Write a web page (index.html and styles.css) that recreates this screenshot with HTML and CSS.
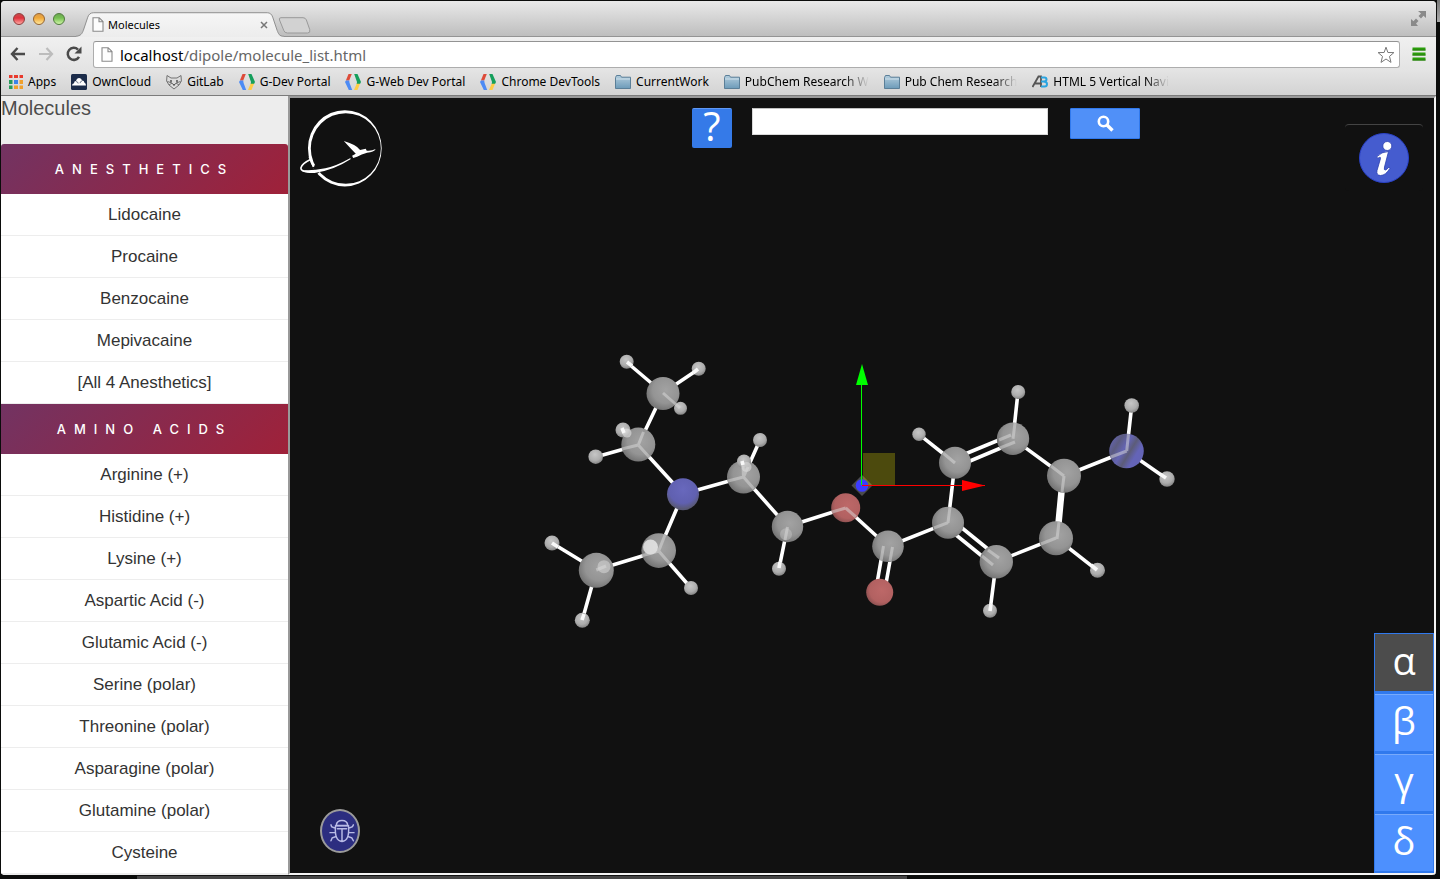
FILE: index.html
```html
<!DOCTYPE html>
<html lang="en">
<head>
<meta charset="utf-8">
<title>Molecules</title>
<link rel="stylesheet" href="styles.css">
</head>
<body>
<svg class="defs" aria-hidden="true">
  <defs>
    <linearGradient id="tabfill" x1="0" y1="0" x2="0" y2="1"><stop offset="0" stop-color="#f6f6f6"/><stop offset="1" stop-color="#ececec"/></linearGradient>
    <linearGradient id="folderfill" x1="0" y1="0" x2="0" y2="1"><stop offset="0" stop-color="#b3cddd"/><stop offset="1" stop-color="#6d9bb9"/></linearGradient>
    <radialGradient id="gc" cx=".58" cy=".4" r=".66"><stop offset="0" stop-color="#a2a2a2"/><stop offset=".6" stop-color="#949494"/><stop offset="1" stop-color="#6e6e6e"/></radialGradient>
    <radialGradient id="gh" cx=".45" cy=".35" r=".7"><stop offset="0" stop-color="#c6c6c6"/><stop offset=".6" stop-color="#adadad"/><stop offset="1" stop-color="#7c7c7c"/></radialGradient>
    <radialGradient id="gn" cx=".5" cy=".35" r=".72"><stop offset="0" stop-color="#6868bd"/><stop offset=".6" stop-color="#6060b0"/><stop offset=".85" stop-color="#595973"/><stop offset="1" stop-color="#55558f"/></radialGradient>
    <linearGradient id="gm" x1="0" y1=".2" x2="1" y2=".8"><stop offset="0" stop-color="#6464b4"/><stop offset=".22" stop-color="#5c5c80"/><stop offset=".42" stop-color="#6464b4"/><stop offset=".58" stop-color="#5c5c78"/><stop offset=".75" stop-color="#6464b8"/><stop offset="1" stop-color="#6464b4"/></linearGradient>
    <radialGradient id="go" cx=".58" cy=".42" r=".64"><stop offset="0" stop-color="#bd6868"/><stop offset=".7" stop-color="#b26161"/><stop offset="1" stop-color="#864e4e"/></radialGradient>
    <symbol id="page" viewBox="0 0 12 15"><path d="M1 .7h6.2L11 4.5v9.8H1zM7 .7v4h4" fill="#fdfdfd" stroke="#8a8a8a" stroke-width="1.1"/></symbol>
    <symbol id="folder" viewBox="0 0 16 14"><path d="M.5 2.500 1.500.5h4l1 1.700h9v11.300H.5z" fill="url(#folderfill)" stroke="#5b7f98"/><path d="M1 4h14" stroke="#cfe0ea"/></symbol>
    <symbol id="devs" viewBox="0 0 16 16"><path d="M3.500 0h3.300L4.200 6.500H.9z" fill="#dd4b39"/><path d="M.9 6.500h3.300l.4 2.500 2.600 7H3.800L0 8z" fill="#4c8bf5"/><path d="M9.200 0h3.300L16 8l-1 2h-3.300l.3-2z" fill="#159f5c"/><path d="M11.600 9.700H15L12.500 16H9z" fill="#ffcd46"/></symbol>
  </defs>
</svg>
<div class="window">
  <header class="titlebar">
    <div class="lights">
      <button class="light light-red" aria-label="Close window"></button>
      <button class="light light-amber" aria-label="Minimize window"></button>
      <button class="light light-green" aria-label="Zoom window"></button>
    </div>
    <div class="tab">
      <svg class="tab-shape" viewBox="0 0 212 25" aria-hidden="true"><path d="M0 24.500C5 24 6 22 7.500 18.500L12 5Q13.500.5 18 .5H195Q199 .5 200.500 5L205 18.500C206.500 22 207 24.500 212 24.500V26H0z" fill="url(#tabfill)"/><path d="M0 24.500C5 24 6 22 7.500 18.500L12 5Q13.500.5 18 .5H195Q199 .5 200.500 5L205 18.500C206.500 22 207 24.500 212 24.500" fill="none" stroke="#8e8e8e"/></svg>
      <svg class="tab-icon" aria-hidden="true"><use href="#page"/></svg>
      <span class="tab-title">Molecules</span>
      <button class="tab-close" aria-label="Close tab"><svg viewBox="0 0 8 8"><path d="M1 1l6 6M7 1 1 7" stroke="#777" stroke-width="1.500"/></svg></button>
    </div>
    <button class="new-tab" aria-label="New tab"><svg viewBox="0 0 33 17"><path d="M3 .7h22q2.500 0 3.400 2.300l3.300 9.500q1 3.500-2 3.500H9.500q-2.800 0-3.700-2.500L1.500 3Q.7.7 3 .7z" fill="#d2d2d2" stroke="#999"/></svg></button>
    <button class="fullscreen" aria-label="Full screen"><svg viewBox="0 0 15 15"><path d="M7 0h8v7l-2.500-2.300L10 7.500 7.500 5 10 2.500zM0 8l2.500 2.300L5 7.500 7.500 10 5 12.500 7 15H0z" fill="#8a8a8a"/></svg></button>
  </header>
  <nav class="toolbar" aria-label="Navigation">
    <button class="nav-button" aria-label="Back"><svg viewBox="0 0 16 14"><path d="M7.500 1 2 7l5.500 6M2.500 7H15" fill="none" stroke="#4a4a4a" stroke-width="2.400"/></svg></button>
    <button class="nav-button" aria-label="Forward"><svg viewBox="0 0 16 14"><path d="M8.500 1 14 7l-5.500 6M13.500 7H1" fill="none" stroke="#bcbcbc" stroke-width="2.200"/></svg></button>
    <button class="nav-button" aria-label="Reload"><svg viewBox="0 0 16 16"><path d="M13 10.800A6 6 0 1 1 12 3.600" fill="none" stroke="#4a4a4a" stroke-width="2.500"/><path d="M15.500.5v7h-7z" fill="#4a4a4a"/></svg></button>
    <div class="address">
      <svg class="address-icon" aria-hidden="true"><use href="#page"/></svg>
      <a class="url" href="#"><span class="host">localhost</span>/dipole/molecule_list.html</a>
      <button class="star" aria-label="Bookmark this page"><svg viewBox="0 0 18 18"><path d="M9 1.200l1.900 5.300 6 .1-4.400 3.800 1.500 6L9 13l-5 3.400 1.500-6L1.100 6.600l6-.1z" fill="#fff" stroke="#777" stroke-linejoin="round"/></svg></button>
    </div>
    <button class="menu" aria-label="Menu"><svg viewBox="0 0 14 14"><path d="M.5 2h13M.5 7h13M.5 12h13" stroke="#2a9e0a" stroke-width="2.800"/><path d="M.5 3h13M.5 8h13M.5 13h13" stroke="#2b7a12"/></svg></button>
  </nav>
  <nav class="bookmarks" aria-label="Bookmarks">
    <a class="bookmark" href="#"><svg class="apps-icon" viewBox="0 0 14 14"><path d="M0 0h3.500v3H0zM5 0h4v3H5zM10.500 0H14v3h-3.500z" fill="#e8392c"/><path d="M0 5h3.500v4H0zM0 10.500h3.500V14H0z" fill="#279b5a"/><path d="M5 5h4v4H5z" fill="#3b84e8"/><path d="M10.500 5H14v4h-3.500zM10.500 10.500H14V14h-3.500zM5 10.500h4V14H5z" fill="#f0a02c"/></svg><span>Apps</span></a>
    <a class="bookmark" href="#"><svg class="mark" viewBox="0 0 16 16"><rect width="16" height="16" rx="1.500" fill="#1c2c4a"/><path d="M1 11.500q0-2 2-2.200Q3 7 5 7q.8-3 3.200-3T11 6.500q2.300 0 2.500 2.300Q15 9.500 15 11.500z" fill="#fff"/><path d="M5 7.500q2 0 2.200 2M11 7q-1.800.3-2 2.200" fill="none" stroke="#1c2c4a" stroke-width=".6"/></svg><span>OwnCloud</span></a>
    <a class="bookmark" href="#"><svg class="mark" viewBox="0 0 16 16"><path d="M1 1.500 5 4h6l4-2.500.4 5.500L13 11l-5 4-5-4L.6 7zM1.500 7.500 6 9l2 2.500L10 9l4.500-1.500M3 11l3-2M13 11l-3-2" fill="#ddd" stroke="#666" stroke-width=".9"/><circle cx="5" cy="7" r=".9" fill="#444"/><circle cx="11" cy="7" r=".9" fill="#444"/><path d="M7 10h2l-1 2z" fill="#444"/></svg><span>GitLab</span></a>
    <a class="bookmark" href="#"><svg class="mark"><use href="#devs"/></svg><span>G-Dev Portal</span></a>
    <a class="bookmark" href="#"><svg class="mark"><use href="#devs"/></svg><span>G-Web Dev Portal</span></a>
    <a class="bookmark" href="#"><svg class="mark"><use href="#devs"/></svg><span>Chrome DevTools</span></a>
    <a class="bookmark" href="#"><svg class="folder-icon"><use href="#folder"/></svg><span>CurrentWork</span></a>
    <a class="bookmark" href="#"><svg class="folder-icon"><use href="#folder"/></svg><span class="faded">PubChem Research W</span></a>
    <a class="bookmark" href="#"><svg class="folder-icon"><use href="#folder"/></svg><span class="faded">Pub Chem Research</span></a>
    <a class="bookmark" href="#"><svg class="mark" viewBox="0 0 16 16"><path d="M.5 13 6.500 2.500H9V13M3 9.500h6" fill="none" stroke="#555" stroke-width="1.800"/><path d="M9 3.500h3.500q2 0 2 2t-3 2q3.500 0 3.500 2.500T12.500 12.500H9M9 7.500h4" fill="none" stroke="#2aa4e0" stroke-width="2"/></svg><span class="faded">HTML 5 Vertical Navi</span></a>
  </nav>
  <div class="content">
    <aside class="sidebar">
      <h1 class="page-title">Molecules</h1>
      <h2 class="group group-first">ANESTHETICS</h2>
      <ul class="list">
        <li><a href="#">Lidocaine</a></li>
        <li><a href="#">Procaine</a></li>
        <li><a href="#">Benzocaine</a></li>
        <li><a href="#">Mepivacaine</a></li>
        <li><a href="#">[All 4 Anesthetics]</a></li>
      </ul>
      <h2 class="group">AMINO ACIDS</h2>
      <ul class="list">
        <li><a href="#">Arginine (+)</a></li>
        <li><a href="#">Histidine (+)</a></li>
        <li><a href="#">Lysine (+)</a></li>
        <li><a href="#">Aspartic Acid (-)</a></li>
        <li><a href="#">Glutamic Acid (-)</a></li>
        <li><a href="#">Serine (polar)</a></li>
        <li><a href="#">Threonine (polar)</a></li>
        <li><a href="#">Asparagine (polar)</a></li>
        <li><a href="#">Glutamine (polar)</a></li>
        <li><a href="#">Cysteine</a></li>
      </ul>
    </aside>
    <main class="viewer">
      <svg class="molecule" viewBox="290 98 1144 775" role="img" aria-label="Procaine molecule">
        <g stroke="#fff" stroke-width="3.600">
          <path d="M663 393 626.500 362M663 393 698.700 369M663 393 638.300 445M638.300 445 595.700 457M638.300 445 683 494M683 494 743.500 477M743.500 477 760 440M743.500 477 744 461M743.500 477 787.500 526.500M787.500 527 779 568.700M787.500 526.500 845.700 508M683 494 658.700 551M658.700 551 691 588M658.700 551 596.300 570M596.300 570 552 543M596.300 570 582.300 620"/>
          <path d="M845.700 508 888 546.500M888 546.500 948 522.700M883.500 546 875.500 592M892.500 547 884.500 592M948 522.700 955 462.700M955 463 919 434.300M953 459 1011 435M957 466.500 1015 442M1013 438.700 1018 392M1013 438.700 1064 476M1064 476 1126.700 451M1126.700 451 1131.700 405.700M1126.700 451 1167 479M1056 538 1097.300 570.300M1056 538 996.300 561.700M996.300 561.700 990 610.700M945 526 993 565M951 519 999 558"/>
          <path d="M1063 476 1057 539" stroke-width="6.500"/>
        </g>
        <g fill="url(#gc)">
          <circle cx="663" cy="393.500" r="16.500"/><circle cx="638.300" cy="444.600" r="17"/><circle cx="743.500" cy="477" r="16.500"/><circle cx="787.500" cy="526.500" r="15.700"/><circle cx="658.700" cy="550.600" r="17.300"/><circle cx="596.300" cy="570.300" r="17.500"/>
          <circle cx="888" cy="546.300" r="15.800"/><circle cx="948" cy="522.700" r="16"/><circle cx="955" cy="462.700" r="16"/><circle cx="1013" cy="438.700" r="16.200"/><circle cx="1064" cy="475.700" r="17"/><circle cx="1056" cy="538.300" r="17"/><circle cx="996.300" cy="561.700" r="16.700"/>
        </g>
        <circle cx="683" cy="494.300" r="16" fill="url(#gn)"/><circle cx="1126.500" cy="451" r="17.300" fill="url(#gm)"/>
        <circle cx="845.700" cy="507.700" r="14.500" fill="url(#go)"/><circle cx="879.700" cy="592.300" r="13.500" fill="url(#go)"/>
        <g fill="url(#gh)">
          <circle cx="626.700" cy="361.700" r="7"/><circle cx="698.700" cy="368.700" r="7"/><circle cx="680.500" cy="408.300" r="6.500"/><circle cx="623" cy="430" r="7.500"/><circle cx="595.700" cy="456.700" r="7.300"/><circle cx="760" cy="440" r="7"/><circle cx="744" cy="461.500" r="7"/><circle cx="779" cy="568.700" r="7"/><circle cx="691" cy="588" r="7"/><circle cx="552" cy="543" r="7.500"/><circle cx="582.300" cy="620.300" r="7.500"/>
          <circle cx="919" cy="434.300" r="6.700"/><circle cx="1018.200" cy="392" r="7"/><circle cx="1131.700" cy="405.500" r="7.300"/><circle cx="1167" cy="479" r="7.700"/><circle cx="1097.500" cy="570.300" r="7.500"/><circle cx="990" cy="610.700" r="7"/>
        </g>
        <g fill="#d2d2d2" opacity=".75"><circle cx="786" cy="534.300" r="6" opacity=".5"/><circle cx="604" cy="566.700" r="6.500" opacity=".8"/><circle cx="650.500" cy="547" r="7.500" fill="#f2f2f2"/><circle cx="746.500" cy="467" r="5"/><circle cx="627" cy="433" r="4.500" fill="#eee" opacity=".7"/></g>
        <g stroke="#dcdcdc" stroke-width="3" opacity=".5">
          <path d="M663 393 680 408M638.300 445 643.500 432M638.300 445 622 449M638.300 445 650 458M743.500 477 728 481M743.500 477 743 466M743.500 477 748 467M743.500 477 754 489M787.500 527 785 540M658.700 551 665 535M658.700 551 641 556M658.700 551 670 564M596.300 570 606 566"/>
          <path d="M845.700 508 832 512M845.700 508 856 517M883.500 546 881 561M892.500 547 890 561M948 522.700 934 528M948 522.700 950 507M955 463 943 453M1013 438.700 1015 423M1011 435 999 440M1015 442 1000 448M1064 476 1051 466M1064 476 1062 492M1126.700 451 1111 457M1126.700 451 1128.500 434M1056 538 1041 544M1057 539 1059 522M993 565 982 556M999 558 988 550"/>
        </g>
        <g stroke="#f8f8f8" stroke-width="3.600"><path d="M627 362 632 366M698 369 693 373M552 543 558 547M582 620 584 614M779 568 780 562M990 611 991 604M1097 570 1091 565M1166 478 1160 474M622 428 624 433M742 461 743 465"/></g>
        <path d="M863 453h32v32.500h-32z" fill="#4c4a0d"/>
        <path d="M862 475 872.500 485.500 862 496 851.500 485.500z" fill="#4a4a4c"/><path d="M863 476v9h9z" fill="#76752f"/>
        <circle cx="862" cy="485.500" r="6.300" fill="#3c3cff"/>
        <path d="M861.500 385V485" stroke="#00ff00"/><path d="M862 364 868 385H856z" fill="#00ff00"/>
        <path d="M862 485.500H985" stroke="#ff0000"/><path d="M962 480 985 485.500 962 491z" fill="#ff0000"/>
      </svg>
      <div class="top-controls">
        <svg class="logo" viewBox="30 40 250 240" role="img" aria-label="Logo">
          <path fill-rule="evenodd" d="M165 46a111 115 0 1 0 0 230a111 115 0 1 0 0-230zM168 55a105.500 106.500 0 1 1 0 213a105.500 106.500 0 1 1 0-213z" fill="#fff"/>
          <path d="M72 214 86 235" stroke="#111" stroke-width="12"/>
          <path d="M63 194Q36 207 33 219 31 231 54 231" fill="none" stroke="#fff" stroke-width="5"/>
          <path d="M182 190Q140 214 106 221T46 227L36 229Q46 236 74 235 130 228 182 194z" fill="#fff"/>
          <path d="M58 186 71 217" stroke="#fff" stroke-width="5"/>
          <path d="M162 139Q200 150 211 166L228 162 231 168Q245 170 258 163Q253 173 232 174Q215 178 202 186L190 190 187 183 198 177Q178 157 162 139z" fill="#fff"/>
        </svg>
        <form class="search">
          <button class="help" type="button">?</button>
          <input class="search-input" type="text" aria-label="Search molecules">
          <button class="search-button" type="submit" aria-label="Search"><svg viewBox="0 0 17 17"><circle cx="6.500" cy="6.500" r="4.700" fill="none" stroke="#fff" stroke-width="2.600"/><path d="M10 10l5.500 5.500" stroke="#fff" stroke-width="3.400"/></svg></button>
        </form>
        <button class="info" aria-label="Information"><svg viewBox="0 0 50 50"><circle cx="25" cy="25" r="24.500" fill="#455ccf" stroke="#2a42c8"/><g fill="#fff" stroke="#2a3fae" stroke-width=".8"><circle cx="28.300" cy="13" r="4.500"/><path d="M17.500 24q5-5.500 12-5.500L25.500 34q-.8 3.500 1 3 1.500-.5 3.500-3l1 1.200q-4.300 7.300-9.500 7.300-4.500-.2-3.500-5l3.500-12q.4-2.300-2.500-.3z"/></g></svg></button>
      </div>
      <div class="bottom-controls">
        <button class="bug" aria-label="Report a bug"><svg viewBox="986 88 80 72"><g fill="none" stroke="#b9bbe6" stroke-width="4.500" stroke-linecap="round"><path d="M1008 107Q1010 92 1026 92T1044 107z"/><path d="M1006 108H1046Q1050 155 1026 156Q1002 155 1006 108M1026 117V155M1012 117H1040M1006 116 994 111 992 105M1046 116 1058 111 1061 105M1004 129H989M1048 129H1063M1008 141 996 145 992 154M1044 141 1056 145 1061 154"/></g></svg></button>
        <div class="variants">
          <button class="variant variant-active">α</button>
          <button class="variant">β</button>
          <button class="variant">γ</button>
          <button class="variant">δ</button>
        </div>
      </div>
    </main>
  </div>
</div>
<div class="desktop-edge"></div>
</body>
</html>
```
FILE: styles.css
```css
* { box-sizing: border-box; }
html { height: 100%; overflow: hidden; }
body {
  margin: 0;
  height: 100%;
  padding: 1px 4px 0 1px;
  display: flex;
  flex-direction: column;
  overflow: hidden;
  background: linear-gradient(#777, #aaa) right top / 3px 22px no-repeat #0b0c0b;
  font-family: "Liberation Sans", Arial, sans-serif;
}
button { margin: 0; padding: 0; border: 0; background: none; display: flex; align-items: center; justify-content: center; flex: none; }
a { color: inherit; text-decoration: none; }
svg { display: block; flex: none; }
.defs { position: absolute; width: 0; height: 0; }

.window {
  flex: 1;
  min-height: 0;
  display: flex;
  flex-direction: column;
  overflow: hidden;
  border-radius: 4px;
  background: #ededed;
}
.desktop-edge { height: 4px; margin: 0 529px 0 136px; border-top: 1px solid #111; background: #454545; flex: none; }

.titlebar {
  height: 36px;
  display: flex;
  align-items: flex-end;
  border-bottom: 1px solid #949494;
  background: linear-gradient(#e9e9e9, #bebebe);
  flex: none;
}
.lights { display: flex; gap: 8px; padding: 0 0 11px 12px; width: 75px; }
.light { width: 12px; height: 12px; border: 1px solid; border-radius: 50%; }
.light-red { background: linear-gradient(#c74c4c, #e0323c 40%, #ffa9a4); border-color: #8e3a3a; }
.light-amber { background: linear-gradient(#dc9c4a, #f0a838 40%, #ffe79c); border-color: #956430; }
.light-green { background: linear-gradient(#6ca852, #76c052 40%, #d0f5a8); border-color: #4e7a3c; }
.tab { position: relative; width: 208px; height: 25px; margin-bottom: -1px; padding: 0 16px 0 16px; display: flex; align-items: center; gap: 4px; font: 11px/16px "Noto Sans", sans-serif; color: #000; }
.tab-shape { position: absolute; inset: 0; width: 100%; height: 100%; }
.tab-icon { position: relative; width: 12px; height: 15px; }
.tab-title { position: relative; flex: 1; }
.tab-close { position: relative; width: 8px; height: 8px; }
.tab-close svg { width: 8px; height: 8px; }
.new-tab { padding-bottom: 2px; margin-left: -6px; }
.new-tab svg { width: 33px; height: 17px; }
.fullscreen { margin: 0 10px 10px auto; }
.fullscreen svg { width: 15px; height: 15px; }

.toolbar { display: flex; align-items: center; height: 34px; padding: 0 10px 0 9px; background: linear-gradient(#f0f0f0, #e3e3e3); flex: none; }
.nav-button { width: 16px; margin-right: 12px; }
.nav-button svg { width: 16px; height: 16px; }
.address { flex: 1; display: flex; align-items: center; height: 27px; margin: 1px 12px 0 -1px; padding: 0 4px 0 7px; border: 1px solid #adadad; border-top-color: #939393; border-radius: 3px; background: #fff; }
.address-icon { width: 12px; height: 15px; }
.url { flex: 1; margin-left: 7px; font: 15px/20px "Noto Sans", sans-serif; color: #666; }
.host { color: #000; }
.star svg { width: 18px; height: 18px; }
.menu svg { width: 14px; height: 14px; }

.bookmarks { display: flex; align-items: center; gap: 15px; height: 24px; padding: 0 8px 2px; background: linear-gradient(#e3e3e3, #d3d3d3); font: 12px/16px "Noto Sans", sans-serif; color: #000; flex: none; overflow: hidden; }
.bookmark { display: flex; align-items: center; gap: 5px; white-space: nowrap; flex: none; }
.apps-icon { width: 14px; height: 14px; }
.mark { width: 16px; height: 16px; }
.folder-icon { width: 16px; height: 14px; }
.faded { -webkit-mask-image: linear-gradient(90deg, #000 80%, transparent); mask-image: linear-gradient(90deg, #000 80%, transparent); }

.content { flex: 1; min-height: 0; display: flex; border-top: 1px solid #7b7b7b; }
.sidebar { width: 287px; flex: none; overflow: hidden; background: #ededed; color: #333; }
.page-title { margin: 0; height: 48px; font-size: 20px; line-height: 24px; font-weight: 400; color: #4d4d4d; }
.group { margin: 0; height: 50px; font: 500 13px/50px Inter, sans-serif; letter-spacing: 8px; text-align: center; color: #fff; background: linear-gradient(135deg, #723362, #9f2139); }
.group-first { border-radius: 3px 3px 0 0; }
.list { margin: 0; padding: 0; list-style: none; background: #fff; }
.list a { display: block; height: 42px; border-bottom: 1px solid #ededed; font-size: 17px; line-height: 42px; text-align: center; }

.viewer { position: relative; flex: 1; min-width: 0; display: flex; flex-direction: column; justify-content: space-between; border: 2px solid; border-color: #999 #f4f4f4 #f4f4f4 #999; background: #111; }
.molecule { position: absolute; inset: 0; width: 100%; height: 100%; }
.top-controls { position: relative; display: grid; grid-template-columns: calc(50% - 170px) 448px 1fr; align-items: start; padding-top: 10px; }
.logo { width: 83px; height: 80px; margin-left: 10px; }
.search { display: flex; align-items: flex-start; }
.help { width: 40px; height: 40px; border-radius: 2px; border-top: 1px solid #5f98f5; background: #357ae8; color: #fff; font: 40px/34px "Open Sans", sans-serif; align-items: flex-start; }
.search-input { flex: 1; min-width: 0; height: 27px; margin: 0 22px 0 20px; border: 1px solid #d9d9d9; border-top-color: #c0c0c0; background: #fff; font: 14px "Liberation Sans", sans-serif; }
.search-button { width: 70px; height: 31px; border: 1px solid #3079ed; border-radius: 1px; background: #5090f8; }
.search-button svg { width: 17px; height: 17px; }
.info { justify-self: end; width: 78px; height: 67px; margin: 16px 11px 0 0; border-top: 1px solid #444; border-radius: 4px; background: #111; }
.info svg { width: 50px; height: 50px; }
.bottom-controls { position: relative; display: flex; align-items: flex-end; justify-content: space-between; }
.bug { width: 40px; height: 44px; margin: 0 0 20px 30px; border: 2px solid #9b9b9b; border-radius: 50%; background: #2c2e80; }
.bug svg { width: 26px; height: 24px; margin-left: 4px; }
.variants { display: flex; flex-direction: column; }
.variant { width: 60px; height: 60px; border: 1px solid #3079ed; border-bottom-width: 2px; box-shadow: inset 0 1px #78aafb; background: #4d90fe; color: #fff; font: 38px/52px "Open Sans", sans-serif; align-items: flex-start; }
.variant-active { background: #4c4c4c; box-shadow: none; }
```
